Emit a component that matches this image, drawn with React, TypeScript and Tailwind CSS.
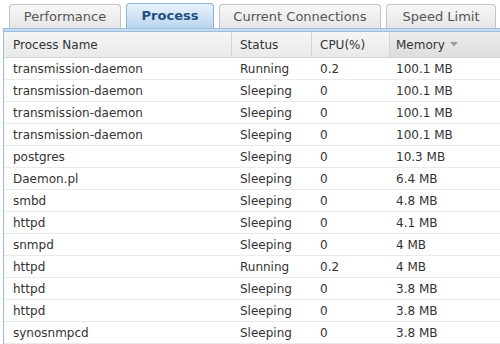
import React from 'react';

const rows = [
  ['transmission-daemon', 'Running', '0.2', '100.1 MB'],
  ['transmission-daemon', 'Sleeping', '0', '100.1 MB'],
  ['transmission-daemon', 'Sleeping', '0', '100.1 MB'],
  ['transmission-daemon', 'Sleeping', '0', '100.1 MB'],
  ['postgres', 'Sleeping', '0', '10.3 MB'],
  ['Daemon.pl', 'Sleeping', '0', '6.4 MB'],
  ['smbd', 'Sleeping', '0', '4.8 MB'],
  ['httpd', 'Sleeping', '0', '4.1 MB'],
  ['snmpd', 'Sleeping', '0', '4 MB'],
  ['httpd', 'Running', '0.2', '4 MB'],
  ['httpd', 'Sleeping', '0', '3.8 MB'],
  ['httpd', 'Sleeping', '0', '3.8 MB'],
  ['synosnmpcd', 'Sleeping', '0', '3.8 MB'],
];

const tabs = [
  { label: 'Performance', w: 'w-[112px]' },
  { label: 'Process', w: 'w-[88px]', active: true },
  { label: 'Current Connections', w: 'w-[162px]' },
  { label: 'Speed Limit', w: 'w-[110px]' },
];

export default function App() {
  return (
    <div className="w-[500px] h-[344px] bg-white overflow-hidden text-[12px] text-[#333]" style={{ fontFamily: '"DejaVu Sans", Verdana, sans-serif' }}>
      {/* Tabs */}
      <div className="flex items-end gap-[5px] pl-[9px] pt-[4px] h-[28px]">
        {tabs.map((t) =>
          t.active ? (
            <div
              key={t.label}
              className={`${t.w} h-[25px] flex items-center justify-center rounded-t-[4px] border border-b-0 border-[#8fb3d6] bg-gradient-to-b from-[#eaf3fb] to-[#b9d5ef] font-bold text-[13px] text-[#1f4f82]`}
            >
              {t.label}
            </div>
          ) : (
            <div
              key={t.label}
              className={`${t.w} h-[24px] flex items-center justify-center rounded-t-[4px] border border-b-0 border-[#c3c3c3] bg-gradient-to-b from-[#f7f7f7] to-[#e6e6e6] text-[13px] text-[#555]`}
            >
              {t.label}
            </div>
          )
        )}
      </div>

      {/* Panel */}
      <div className="ml-[3px] border-l border-[#9dbcdc]">
        <div className="h-[4px] bg-[#c6dcf1] border-y border-[#9dbcdc]" />
        {/* Header */}
        <div className="grid grid-cols-[228px_80px_78px_1fr] h-[26px] bg-gradient-to-b from-[#f6f6f6] to-[#e9e9e9] border-b border-[#d4d4d4] text-[#333]">
          <div className="flex items-center pl-[9px] border-r border-[#d4d4d4]">Process Name</div>
          <div className="flex items-center pl-[8px] border-r border-[#d4d4d4]">Status</div>
          <div className="flex items-center pl-[8px] border-r border-[#d4d4d4]">CPU(%)</div>
          <div className="flex items-center pl-[6px] gap-[5px] bg-gradient-to-b from-[#ececec] to-[#dedede]">
            Memory
            <svg width="8" height="5" viewBox="0 0 8 5">
              <path d="M0 0h8L4 4.5z" fill="#9a9a9a" />
            </svg>
          </div>
        </div>
        {/* Rows */}
        {rows.map((r, i) => (
          <div key={i} className="grid grid-cols-[228px_80px_78px_1fr] h-[22px] border-b border-[#ebebeb]">
            <div className="flex items-center pl-[9px]">{r[0]}</div>
            <div className="flex items-center pl-[8px]">{r[1]}</div>
            <div className="flex items-center pl-[8px]">{r[2]}</div>
            <div className="flex items-center pl-[6px]">{r[3]}</div>
          </div>
        ))}
      </div>
    </div>
  );
}
